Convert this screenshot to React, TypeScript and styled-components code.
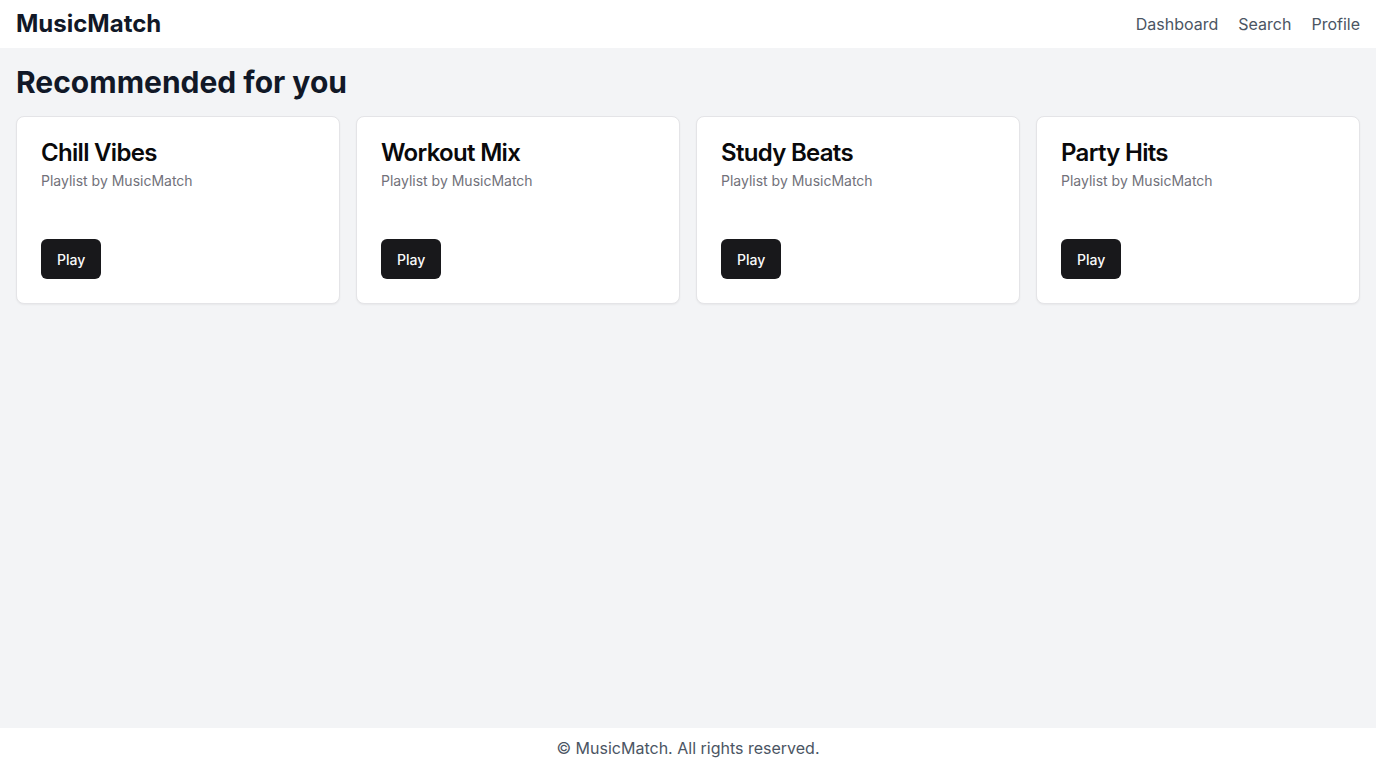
import React from "react";
import styled, { createGlobalStyle } from "styled-components";

const GlobalStyle = createGlobalStyle`
  *, *::before, *::after { box-sizing: border-box; }
  html, body { margin: 0; padding: 0; }
  body {
    font-family: Inter, "Noto Sans", sans-serif;
    background: #f3f4f6;
    color: #111827;
  }
`;

const Page = styled.div`
  min-height: 100vh;
  display: flex;
  flex-direction: column;
  background: #f3f4f6;
`;

const Header = styled.header`
  background: #ffffff;
  height: 48px;
  padding: 0 16px;
  display: flex;
  align-items: center;
  justify-content: space-between;
`;

const Brand = styled.h1`
  margin: 0;
  font-size: 24px;
  line-height: 32px;
  font-weight: 700;
  color: #111827;
`;

const Nav = styled.nav`
  display: flex;
  gap: 20px;
`;

const NavLink = styled.a`
  font-size: 16px;
  line-height: 24px;
  color: #4b5563;
  text-decoration: none;
`;

const Main = styled.main`
  flex: 1;
  padding: 16px;
`;

const Heading = styled.h2`
  margin: 0 0 16px;
  font-size: 30px;
  line-height: 36px;
  font-weight: 700;
  color: #111827;
`;

const Grid = styled.div`
  display: grid;
  grid-template-columns: repeat(4, 1fr);
  gap: 16px;
`;

const Card = styled.div`
  background: #ffffff;
  border: 1px solid #e4e4e7;
  border-radius: 8px;
  box-shadow: 0 1px 2px 0 rgba(0, 0, 0, 0.05);
  padding: 24px;
  display: flex;
  flex-direction: column;
`;

const CardTitle = styled.h3`
  margin: 0;
  font-size: 24px;
  line-height: 24px;
  font-weight: 600;
  letter-spacing: -0.7px;
  color: #09090b;
`;

const CardDesc = styled.p`
  margin: 6px 0 0;
  font-size: 14px;
  line-height: 20px;
  color: #71717a;
`;

const CardFooter = styled.div`
  margin-top: 48px;
  display: flex;
`;

const PlayButton = styled.button`
  height: 40px;
  padding: 0 16px;
  border: none;
  border-radius: 6px;
  background: #18181b;
  color: #fafafa;
  font-family: inherit;
  font-size: 14px;
  font-weight: 500;
  cursor: pointer;
`;

const Footer = styled.footer`
  background: #ffffff;
  height: 40px;
  display: flex;
  align-items: center;
  justify-content: center;
  font-size: 16px;
  color: #4b5563;
`;

const playlists = ["Chill Vibes", "Workout Mix", "Study Beats", "Party Hits"];

export default function App() {
  return (
    <Page>
      <GlobalStyle />
      <Header>
        <Brand>MusicMatch</Brand>
        <Nav>
          <NavLink href="#">Dashboard</NavLink>
          <NavLink href="#">Search</NavLink>
          <NavLink href="#">Profile</NavLink>
        </Nav>
      </Header>
      <Main>
        <Heading>Recommended for you</Heading>
        <Grid>
          {playlists.map((p) => (
            <Card key={p}>
              <CardTitle>{p}</CardTitle>
              <CardDesc>Playlist by MusicMatch</CardDesc>
              <CardFooter>
                <PlayButton>Play</PlayButton>
              </CardFooter>
            </Card>
          ))}
        </Grid>
      </Main>
      <Footer>© MusicMatch. All rights reserved.</Footer>
    </Page>
  );
}
